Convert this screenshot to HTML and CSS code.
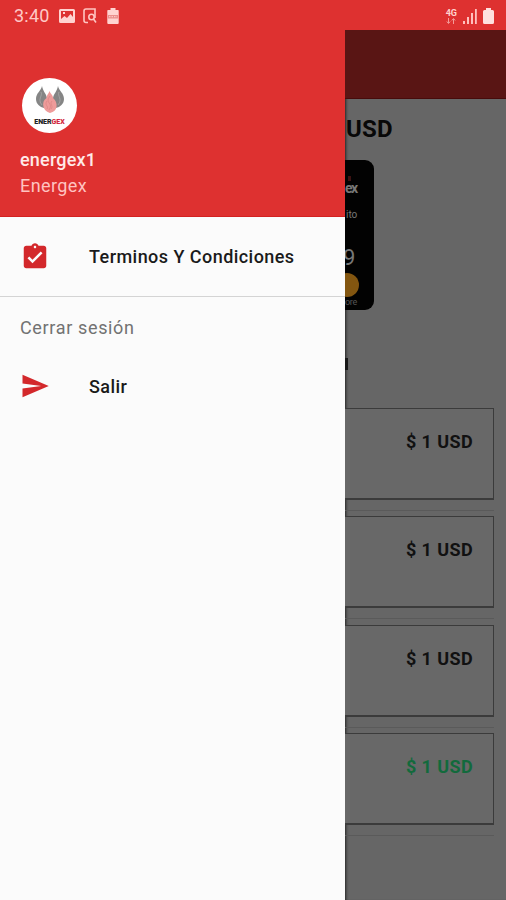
FILE: index.html
```html
<!DOCTYPE html>
<html lang="es">
<head>
  <meta charset="UTF-8">
  <title>Energex</title>
  <link rel="stylesheet" href="styles.css">
</head>
<body>
  <div class="status-bar">
    <span class="time">3:40</span>
    <svg class="icon-image" width="16" height="14" viewBox="0 0 16 14">
      <path fill="#ffd3d0" fill-rule="evenodd" d="M1.500 0h13Q16 0 16 1.500v11q0 1.500-1.500 1.500h-13Q0 14 0 12.500v-11Q0 0 1.500 0zM2 2v8l3.500-3 2.500 2 3.500-4L14 8V2zM4 3h2v2H4z"/>
    </svg>
    <svg class="icon-search" width="14" height="16" viewBox="0 0 14 16" fill="none" stroke="#ffc5c1" stroke-width="1.600">
      <path d="M5 14.500H3Q1 14.500 1 12.500V3Q1 1 3 1h9v4"/>
      <circle cx="8.500" cy="9" r="2.700"/>
      <path d="M10.500 11l2.500 3.500M12 5v5"/>
    </svg>
    <svg class="icon-saver" width="12" height="16" viewBox="0 0 12 16">
      <path fill="#ffd3d0" d="M3.500 0h5v2H11q.7 0 .7.700V15q0 1-1 1H1.300q-1 0-1-1V2.700Q.3 2 1 2h2.500z"/>
      <path fill="#eb8f8c" d="M1 7h10v3.500H1z"/>
      <path stroke="#ffd3d0" stroke-width="1" stroke-dasharray="1.500 1" d="M2 8.700h8"/>
    </svg>
    <div class="network">
      <span>4G</span>
      <svg width="10" height="6" viewBox="0 0 10 6" fill="none" stroke="#f39b98" stroke-width="1">
        <path d="M2.500 0v5M.8 3.500l1.700 2 1.700-2M7.500 6V1M5.800 2.500L7.500.5l1.700 2"/>
      </svg>
    </div>
    <svg class="icon-signal" width="14" height="15" viewBox="0 0 14 15" fill="#ffc0bd">
      <path d="M0 12h2v3H0zM4 8h2v7H4zM8 4h2v11H8zM12 0h1.800v15H12z"/>
    </svg>
    <svg class="icon-battery" width="11" height="16" viewBox="0 0 11 16">
      <path fill="#ffe0de" d="M3 0h5v2h1.500Q11 2 11 3.500v11q0 1.500-1.500 1.500h-8Q0 16 0 14.500v-11Q0 2 1.500 2H3z"/>
    </svg>
  </div>

  <div class="screen">
    <div class="drawer">
      <div class="drawer-header">
        <div class="avatar">
          <svg width="30" height="29" viewBox="0 0 30 29">
            <path fill="#858585" d="M7 0C6 5 1 7 1 13c0 5 4 8 8 9 3-2 3-5 3-9C12 8 8 6 7 0zM23 0c1 5 6 7 6 13 0 5-4 8-8 9-3-2-3-5-3-9 0-5 4-7 5-13z"/>
            <path fill="none" stroke="#b5b5b5" stroke-width=".6" d="M6 6c2 4-4 7 1 13M24 6c-2 4 4 7-1 13"/>
            <path fill="#ee9b9a" d="M14.500 5c-1 3-3 4-3 7-3 2-4 5-3 9 1 3 3 5 6.500 6 4-1 6-3 6.500-6 .5-4-1-7-3.500-9 0-3-2.500-4-3.500-7z"/>
            <path fill="none" stroke="#d98281" stroke-width=".7" d="M15 10c-6 7 4 7-1 14M17 15c-3 4 2 4-1 8M12 15c-3 4 2 5 0 8"/>
          </svg>
          <div class="avatar-name">ENER<span>GEX</span></div>
        </div>
        <div class="user-name">energex1</div>
        <div class="user-company">Energex</div>
      </div>
      <div class="menu-item terms">
        <svg width="30" height="30" viewBox="0 0 24 24">
          <path fill="#d3282b" d="M19 3h-4.180C14.400 1.840 13.300 1 12 1c-1.300 0-2.400.84-2.820 2H5c-1.100 0-2 .9-2 2v14c0 1.100.9 2 2 2h14c1.100 0 2-.9 2-2V5c0-1.100-.9-2-2-2zm-7 0c.55 0 1 .45 1 1s-.45 1-1 1-1-.45-1-1 .45-1 1-1zm-2 14l-4-4 1.410-1.410L10 14.170l6.590-6.590L18 9l-8 8z"/>
        </svg>
        <span>Terminos Y Condiciones</span>
      </div>
      <div class="menu-title">Cerrar sesión</div>
      <div class="menu-item logout">
        <svg width="30" height="30" viewBox="0 0 24 24">
          <path fill="#d3282b" d="M2.010 21L23 12 2.010 3 2 10l15 2-15 2z"/>
        </svg>
        <span>Salir</span>
      </div>
    </div>

    <div class="page">
      <div class="toolbar"></div>
      <div class="balance">USD</div>
      <div class="bank-card">
        <div class="card-mark"></div>
        <div class="card-brand">ex</div>
        <div class="card-type">ito</div>
        <div class="card-number">9</div>
        <div class="card-circle"></div>
        <div class="card-label">ore</div>
      </div>
      <div class="section-edge"></div>
      <div class="row"><div class="movement">$ 1 USD</div></div>
      <div class="row"><div class="movement">$ 1 USD</div></div>
      <div class="row"><div class="movement">$ 1 USD</div></div>
      <div class="row"><div class="movement income">$ 1 USD</div></div>
    </div>
  </div>
</body>
</html>
```
FILE: styles.css
```css
* {
  box-sizing: border-box;
}

body {
  margin: 0;
  height: 900px;
  overflow: hidden;
  background: #666;
  font-family: Roboto, "Liberation Sans", sans-serif;
}

svg {
  display: block;
  flex-shrink: 0;
}

.status-bar {
  display: flex;
  align-items: center;
  height: 30px;
  padding: 2px 12px 0 14px;
  background: #de3130;
}

.time {
  width: 45px;
  margin-top: -1px;
  font-size: 18px;
  letter-spacing: 0.2px;
  color: #ffc9c6;
}

.icon-search {
  margin-left: 8px;
}

.icon-saver {
  margin-left: 10px;
}

.network {
  display: flex;
  flex-direction: column;
  align-items: center;
  margin-left: auto;
  font-size: 9px;
  font-weight: 700;
  line-height: 9px;
  color: #ffd3d0;
}

.icon-signal {
  margin-left: 6px;
}

.icon-battery {
  margin-left: 6px;
}

.screen {
  display: grid;
  grid-template-columns: 345px 161px;
  height: 870px;
}

.drawer {
  background: #fbfbfb;
}

.drawer-header {
  height: 187px;
  padding: 48px 20px 0;
  background: #de3130;
  border-bottom: 1px solid #d32221;
}

.avatar {
  display: flex;
  flex-direction: column;
  align-items: center;
  width: 55px;
  height: 55px;
  margin-left: 2px;
  padding-top: 8px;
  border-radius: 50%;
  background: #fff;
}

.avatar-name {
  margin-top: 3px;
  font-size: 7px;
  font-weight: 900;
  line-height: 8px;
  color: #222;
}

.avatar-name span {
  color: #d3283f;
}

.user-name {
  margin-top: 14px;
  font-size: 18px;
  font-weight: 500;
  line-height: 26px;
  letter-spacing: 0.2px;
  color: #ffeae8;
}

.user-company {
  font-size: 18px;
  line-height: 26px;
  letter-spacing: 0.4px;
  color: #ffc3c0;
}

.menu-item {
  display: flex;
  align-items: center;
  gap: 39px;
  padding-left: 20px;
  font-size: 18px;
  font-weight: 500;
  letter-spacing: 0.45px;
  color: #1a1a1a;
}

.terms {
  height: 80px;
  border-bottom: 1px solid #d4d4d4;
}

.menu-title {
  padding-left: 20px;
  font-size: 18px;
  line-height: 62px;
  letter-spacing: 0.65px;
  color: #727272;
}

.logout {
  height: 54px;
}

.page {
  overflow: hidden;
  background: #666;
  box-shadow: inset 3px 0 3px -2px #222;
}

.toolbar {
  height: 69px;
  background: #591514;
  border-bottom: 1px solid #470b0b;
}

.balance {
  height: 61px;
  padding-left: 1px;
  font-size: 24px;
  font-weight: 700;
  line-height: 61px;
  letter-spacing: 0.2px;
  color: #080808;
}

.bank-card {
  width: 29px;
  height: 150px;
  padding-top: 16px;
  overflow: hidden;
  border-radius: 0 9px 9px 0;
  background: #020202;
  color: #777;
}

.card-mark {
  width: 3px;
  height: 5px;
  margin-left: 3px;
  background: #3d1212;
}

.card-brand {
  font-size: 14px;
  font-weight: 700;
  line-height: 14px;
  letter-spacing: -1.5px;
}

.card-type {
  margin-top: 14px;
  padding-left: 1px;
  font-size: 10px;
  line-height: 12px;
}

.card-number {
  width: 10px;
  margin: 25px 0 0 -2px;
  font-size: 22px;
  line-height: 24px;
}

.card-circle {
  width: 24px;
  height: 24px;
  margin: 3px 0 0 -10px;
  border-radius: 50%;
  background: #835610;
}

.card-label {
  font-size: 9px;
  line-height: 11px;
  letter-spacing: -0.3px;
  color: #555;
}

.section-edge {
  width: 3px;
  height: 12px;
  margin: 48px 0 37px;
  background: #171717;
}

.row {
  height: 108.3px;
  padding: 1px 12px 0 0;
}

.row::after {
  content: "";
  display: block;
  height: 1px;
  margin-top: 10px;
  background: #5a5a5a;
}

.movement {
  height: 92px;
  padding-right: 20px;
  border: 1px solid #3b3b3b;
  border-left: 0;
  border-bottom-width: 2px;
  background: #686868;
  font-size: 18px;
  font-weight: 700;
  line-height: 66px;
  letter-spacing: 0.4px;
  text-align: right;
  color: #111;
}

.movement.income {
  color: #126a3c;
}
```
